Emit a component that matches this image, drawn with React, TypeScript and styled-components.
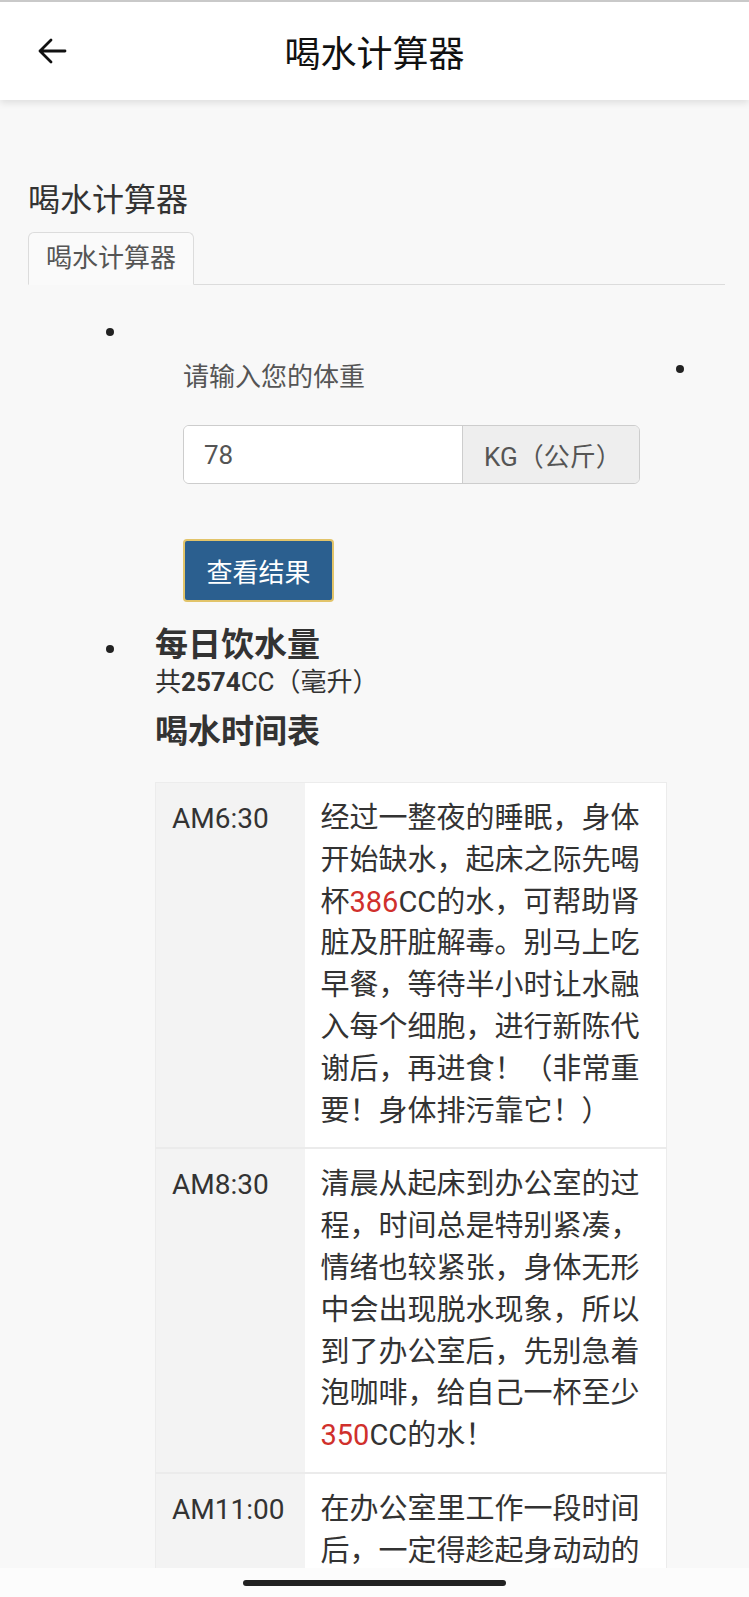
import React from 'react';
import styled, { createGlobalStyle } from 'styled-components';

const GlobalStyle = createGlobalStyle`
  html,
  body {
    margin: 0;
    padding: 0;
  }

  body {
    font-family: Roboto, 'Noto Sans CJK SC', sans-serif;
    background: #f8f8f8;
    color: #333;
    text-spacing-trim: space-all;
  }

  * {
    box-sizing: border-box;
  }
`;

const Screen = styled.div`
  display: flex;
  flex-direction: column;
  width: 749px;
  height: 1597px;
  overflow: hidden;
  background: #f8f8f8;
`;

const TopBar = styled.header`
  flex: 0 0 100px;
  position: relative;
  z-index: 1;
  display: grid;
  grid-template-columns: 110px 1fr 110px;
  align-items: center;

  background: #fff;
  border-top: 2px solid #c9c9c9;
  box-shadow: 0 3px 7px rgba(0, 0, 0, 0.1);
`;

const BackButton = styled.button`
  display: flex;
  align-items: center;
  padding: 0 0 0 37px;
  height: 100%;
  border: none;
  background: none;
  color: #111;
`;

const TopTitle = styled.h1`
  margin: 0;
  text-align: center;
  font-size: 36px;
  font-weight: 400;
  color: #111;
`;

const Main = styled.main`
  flex: 1 1 auto;
  overflow: hidden;
  padding: 0 24px 0 28px;
`;

const PageTitle = styled.h2`
  margin: 81px 0 0;
  font-size: 32px;
  line-height: 38px;
  font-weight: 400;
  color: #333;
`;

const TabBar = styled.div`
  display: flex;
  margin-top: 13px;
  border-bottom: 1px solid #dcdcdc;
`;

const Tab = styled.div`
  margin-bottom: -1px;
  padding: 0 17px;
  height: 53px;
  line-height: 51px;
  font-size: 26px;
  color: #555;
  background: #fafafa;
  border: 1px solid #dcdcdc;
  border-bottom-color: #fafafa;
  border-radius: 6px 6px 0 0;
`;

const List = styled.ul`
  margin: 0;
  padding: 0;
  list-style: none;
`;

const Item = styled.li<{ $gap: number }>`
  display: grid;
  grid-template-columns: 127px 1fr;
  align-items: start;
  margin-top: ${(p) => p.$gap}px;
`;

const Marker = styled.span<{ $top: number }>`
  justify-self: end;
  width: 8px;
  height: 8px;
  margin: ${(p) => p.$top}px 41px 0 0;
  border-radius: 50%;
  background: #222;
`;

const FormBlock = styled.form`
  display: grid;
  grid-template-columns: 457px 1fr;
  align-items: start;
  padding: 74px 0 0 28px;
`;

const StrayMarker = styled(Marker)`
  grid-column: 2;
  grid-row: 1;
`;

const Label = styled.label`
  grid-column: 1;
  grid-row: 1;
  font-size: 26px;
  line-height: 36px;
  color: #555;
`;

const InputGroup = styled.div`
  grid-column: 1;
  display: flex;
  height: 59px;
  margin-top: 30px;
  border: 1px solid #cdcdcd;
  border-radius: 6px;
  overflow: hidden;
`;

const WeightInput = styled.input`
  width: 278px;
  padding: 0 20px;
  border: none;
  outline: none;
  background: #fff;
  font-family: inherit;
  font-size: 26px;
  color: #555;
`;

const Addon = styled.span`
  flex: 1;
  display: flex;
  align-items: center;
  padding-left: 21px;
  background: #eee;
  border-left: 1px solid #cdcdcd;
  font-size: 26px;
  color: #555;
`;

const SubmitButton = styled.button`
  grid-column: 1;
  width: 151px;
  height: 63px;
  margin-top: 55px;
  padding: 0;
  background: #2b5f8f;
  border: 2px solid #e2c46a;
  border-radius: 4px;
  color: #fff;
  font-family: inherit;
  font-size: 26px;
`;

const Results = styled.div`
  display: flex;
  flex-direction: column;
  align-items: flex-start;
`;

const ResultHeading = styled.h3<{ $gap?: number }>`
  margin: ${(p) => p.$gap ?? 0}px 0 0;
  font-size: 33px;
  line-height: 40px;
  font-weight: 700;
  color: #333;
`;

const Total = styled.div`
  font-size: 26px;
  line-height: 34px;
  color: #333;

  b {
    font-weight: 700;
  }
`;

const Schedule = styled.table`
  width: 512px;
  margin-top: 30px;
  border-collapse: collapse;
  border: 1px solid #ececec;
`;

const Row = styled.tr`
  border-bottom: 2px solid #ebebeb;
`;

const TimeCell = styled.td`
  width: 149px;
  padding: 15px 16px;
  vertical-align: top;
  background: #f3f3f3;
  font-size: 28px;
  line-height: 41.8px;
  color: #333;
  white-space: nowrap;
`;

const TextCell = styled.td`
  padding: 15px 16px;
  vertical-align: top;
  background: #fff;
  font-size: 29px;
  line-height: 41.8px;
  color: #333;
`;

const Amount = styled.span`
  color: #d0302c;
`;

const BottomStrip = styled.div`
  flex: 0 0 29px;
  display: flex;
  justify-content: center;
  padding-top: 12px;
  background: #fcfcfc;
`;

const HomeBar = styled.span`
  width: 263px;
  height: 6px;
  border-radius: 3px;
  background: #222;
`;

const schedule = [
  {
    time: 'AM6:30',
    before: '经过一整夜的睡眠，身体开始缺水，起床之际先喝杯',
    amount: '386',
    after: 'CC的水，可帮助肾脏及肝脏解毒。别马上吃早餐，等待半小时让水融入每个细胞，进行新陈代谢后，再进食！（非常重要！身体排污靠它！）',
  },
  {
    time: 'AM8:30',
    before: '清晨从起床到办公室的过程，时间总是特别紧凑，情绪也较紧张，身体无形中会出现脱水现象，所以到了办公室后，先别急着泡咖啡，给自己一杯至少',
    amount: '350',
    after: 'CC的水！',
  },
  {
    time: 'AM11:00',
    before: '在办公室里工作一段时间后，一定得趁起身动动的时候，再给自己一天中的第三杯水，至少',
    amount: '350',
    after: 'CC，补充流失的水分，有助于放松紧张的工作情绪！',
  },
];

const BackArrow = () => (
  <svg width='30' height='26' viewBox='0 0 30 26' fill='none'>
    <path
      d='M28 13H3M14 2L3 13l11 11'
      stroke='currentColor'
      strokeWidth='2.8'
      strokeLinecap='round'
      strokeLinejoin='round'
    />
  </svg>
);

export default function App() {
  return (
    <>
      <GlobalStyle />
      <Screen>
        <TopBar>
          <BackButton type='button' aria-label='返回'>
            <BackArrow />
          </BackButton>
          <TopTitle>喝水计算器</TopTitle>
          <span />
        </TopBar>

        <Main>
          <PageTitle>喝水计算器</PageTitle>
          <TabBar>
            <Tab>喝水计算器</Tab>
          </TabBar>

          <List>
            <Item $gap={0}>
              <Marker $top={43} />
              <FormBlock onSubmit={(e) => e.preventDefault()}>
                <Label htmlFor='weight'>请输入您的体重</Label>
                <StrayMarker $top={6} />
                <InputGroup>
                  <WeightInput id='weight' defaultValue='78' />
                  <Addon>KG（公斤）</Addon>
                </InputGroup>
                <SubmitButton type='submit'>查看结果</SubmitButton>
              </FormBlock>
            </Item>

            <Item $gap={23}>
              <Marker $top={20} />
              <Results>
                <ResultHeading>每日饮水量</ResultHeading>
                <Total>
                  共<b>2574</b>CC（毫升）
                </Total>
                <ResultHeading $gap={13}>喝水时间表</ResultHeading>
                <Schedule>
                  <tbody>
                    {schedule.map((row) => (
                      <Row key={row.time}>
                        <TimeCell>{row.time}</TimeCell>
                        <TextCell>
                          {row.before}
                          <Amount>{row.amount}</Amount>
                          {row.after}
                        </TextCell>
                      </Row>
                    ))}
                  </tbody>
                </Schedule>
              </Results>
            </Item>
          </List>
        </Main>

        <BottomStrip>
          <HomeBar />
        </BottomStrip>
      </Screen>
    </>
  );
}
